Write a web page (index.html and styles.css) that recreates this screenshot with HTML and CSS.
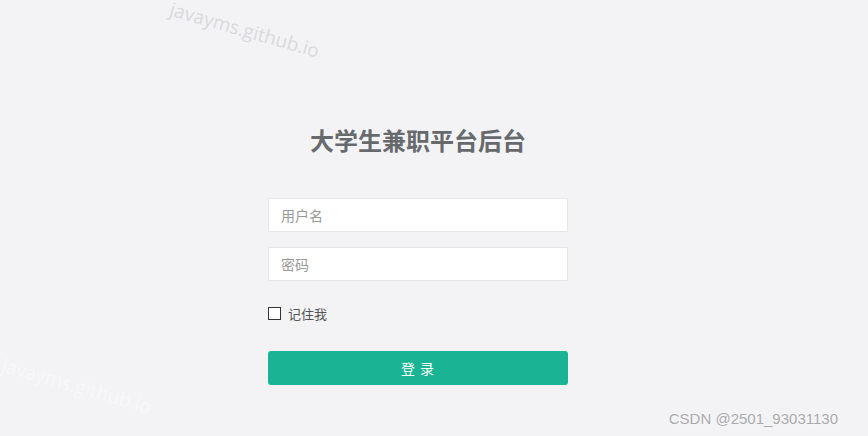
FILE: index.html
```html
<!DOCTYPE html>
<html lang="zh">
<head>
<meta charset="utf-8">
<title>大学生兼职平台后台</title>
<link rel="stylesheet" href="styles.css">
</head>
<body>
<div class="watermark wm-top">javayms.github.io</div>
<div class="watermark wm-bottom">javayms.github.io</div>
<main class="page">
  <form class="login">
    <h1 class="title">大学生兼职平台后台</h1>
    <input class="field" type="text" placeholder="用户名">
    <input class="field" type="password" placeholder="密码">
    <label class="remember"><span class="box"></span>记住我</label>
    <button class="submit" type="button">登 录</button>
  </form>
</main>
<div class="csdn">CSDN @2501_93031130</div>
</body>
</html>
```
FILE: styles.css
```css
html, body {
  margin: 0;
  padding: 0;
  height: 100%;
}
body {
  background: #f3f3f5;
  font-family: "Noto Sans CJK SC", "Liberation Sans", sans-serif;
  color: #676a6c;
  overflow: hidden;
  position: relative;
}
.page {
  display: flex;
  justify-content: center;
  padding: 122px 32px 0 0;
}
.login {
  width: 300px;
  display: flex;
  flex-direction: column;
}
.title {
  margin: 0 0 40px;
  font-size: 24px;
  line-height: 36px;
  font-weight: 700;
  text-align: center;
  color: #676a6c;
}
.field {
  box-sizing: border-box;
  width: 300px;
  height: 34px;
  border: 1px solid #e5e6e7;
  border-radius: 1px;
  background: #fff;
  padding: 0 12px;
  margin: 0 0 15px;
  font-family: inherit;
  font-size: 14px;
  color: #555;
  outline: none;
}
.field::placeholder {
  color: #999;
}
.remember {
  display: flex;
  align-items: center;
  gap: 7px;
  font-size: 13px;
  color: #555;
  height: 20px;
  margin: 7px 0 28px;
}
.box {
  box-sizing: border-box;
  width: 13px;
  height: 13px;
  border: 1px solid #333;
  background: #fff;
}
.submit {
  width: 300px;
  height: 34px;
  border: none;
  border-radius: 3px;
  background: #1ab394;
  color: #fff;
  font-family: inherit;
  font-size: 14px;
  letter-spacing: 1px;
}
.watermark {
  position: absolute;
  font-family: "Open Sans", "Liberation Sans", sans-serif;
  font-size: 19px;
  white-space: nowrap;
  transform-origin: 0 0;
  transform: rotate(16deg);
}
.wm-top {
  left: 174px;
  top: -4px;
  color: #d9d9de;
}
.wm-bottom {
  left: 6px;
  top: 352px;
  color: #f8f8fa;
}
.csdn {
  position: absolute;
  right: 30px;
  bottom: 9px;
  font-family: "Liberation Sans", sans-serif;
  font-size: 15px;
  color: #a9a9ad;
  text-shadow: 0 0 2px #fff;
}
```
